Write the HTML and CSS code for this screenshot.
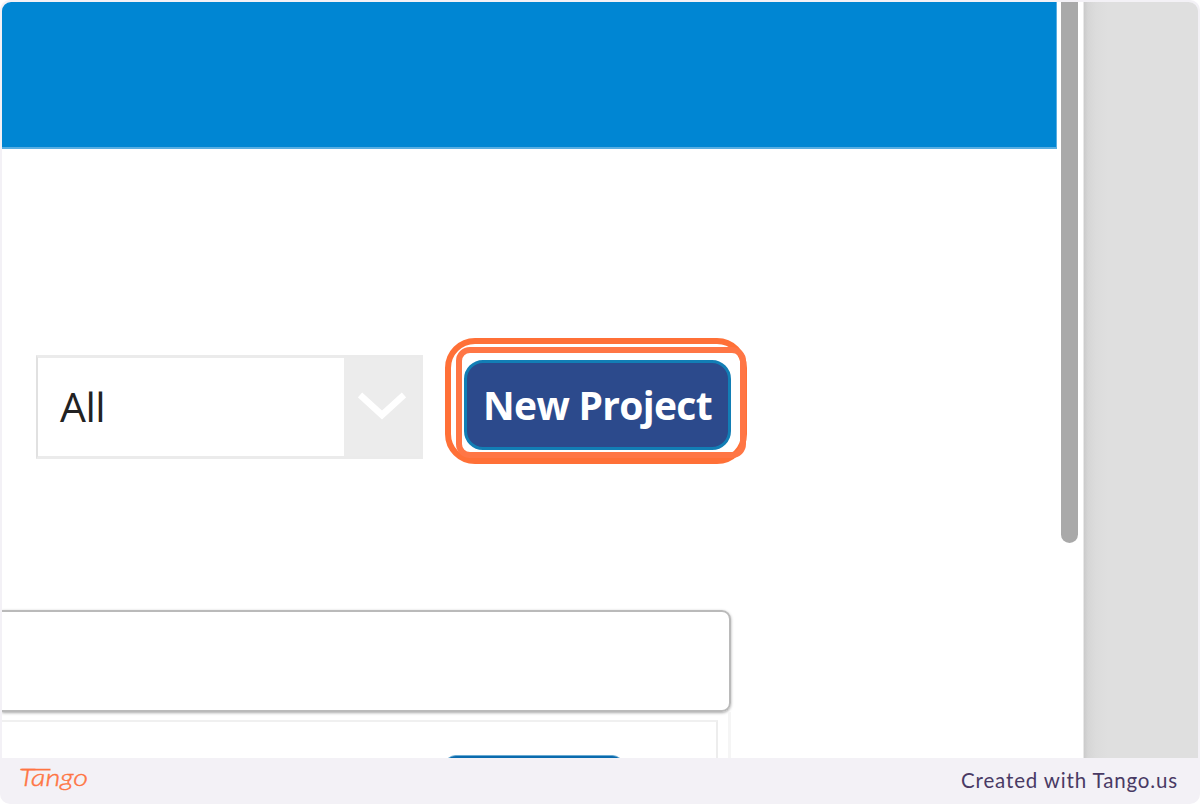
FILE: index.html
```html
<!DOCTYPE html>
<html lang="en">
<head>
    <meta charset="UTF-8">
    <title>New Project</title>
    <link rel="stylesheet" href="styles.css">
</head>
<body>
<div class="frame">
    <div class="screen">
        <div class="page">
            <div class="banner"></div>
            <div class="toolbar">
                <div class="select">
                    <span class="select-value">All</span>
                    <span class="select-arrow">
                        <svg width="48" height="28" viewBox="0 0 48 28">
                            <path d="M2 3 L24 23 L46 3" fill="none" stroke="#fff" stroke-width="6.5"/>
                        </svg>
                    </span>
                </div>
                <div class="highlight">
                    <div class="highlight-inner">
                        <button class="new-project">New Project</button>
                    </div>
                </div>
            </div>
            <div class="panel"></div>
            <div class="list">
                <div class="list-inner">
                    <div class="list-button"></div>
                </div>
            </div>
        </div>
        <div class="scrollbar">
            <div class="thumb"></div>
        </div>
        <div class="backdrop"></div>
    </div>
    <div class="footer">
        <svg class="logo" width="76" height="38" viewBox="0 0 76 38">
            <path d="M4.5 7.6 H33.5" fill="none" stroke="#ff7442" stroke-width="1.8"/>
            <text class="logo-text" x="2" y="23.5" textLength="69" lengthAdjust="spacingAndGlyphs">Tango</text>
        </svg>
        <span class="credit">Created with Tango.us</span>
    </div>
</div>
</body>
</html>
```

FILE: styles.css
```css
* { box-sizing: border-box; }
body {
    margin: 0;
    background: #fff;
    font-family: "Open Sans", "Noto Sans", sans-serif;
}
.frame {
    width: 1200px;
    height: 804px;
    padding: 2px 2px 0;
    background: #f3f1f6;
    border-radius: 10px;
    overflow: hidden;
}
.screen {
    display: flex;
    height: 756px;
    background: #fff;
    border-radius: 9px 9px 0 0;
    overflow: hidden;
}
.page {
    width: 1055px;
    height: 756px;
    overflow: hidden;
}
.banner {
    height: 147px;
    background: #0086d3;
    border-right: 1px solid #58aee2;
    border-bottom: 2px solid #58aee2;
}
.toolbar {
    display: flex;
    align-items: flex-start;
    height: 461px;
    padding: 189px 0 0 34px;
}
.select {
    display: flex;
    width: 387px;
    height: 104px;
    margin-top: 17px;
    border: 3px solid #ebebeb;
    border-left: 2px solid #e1e1e1;
}
.select-value {
    flex: 1;
    padding: 18px 0 0 22px;
    font-size: 41px;
    font-weight: 400;
    line-height: 60px;
    letter-spacing: -0.5px;
    color: #222;
}
.select-arrow {
    display: flex;
    justify-content: center;
    width: 76px;
    padding-top: 34px;
    background: #ececec;
}
.highlight {
    width: 302px;
    height: 126px;
    margin-left: 22px;
    padding: 3px 0 0 5px;
    border: 6px solid #ff7037;
    border-radius: 30px;
}
.highlight-inner {
    width: 290px;
    height: 111px;
    padding: 7px 0 0 2px;
    border: 6px solid #ff7645;
    border-radius: 14px;
}
.new-project {
    display: block;
    width: 267px;
    height: 90px;
    padding: 0 0 1px;
    border: 3px solid #127eb5;
    border-radius: 19px;
    background: #2c4a8c;
    color: #fff;
    font-family: "Open Sans", "Noto Sans", sans-serif;
    font-size: 39px;
    font-weight: 700;
    letter-spacing: -0.7px;
    white-space: nowrap;
}
.panel {
    width: 729px;
    height: 102px;
    border: 2px solid #bababa;
    border-left: none;
    border-radius: 0 9px 9px 0;
    box-shadow: 0 1px 3px #aaa;
}
.list {
    width: 729px;
    height: 60px;
    padding: 8px 10px 0 0;
    border-right: 3px solid #f5f5f5;
}
.list-inner {
    height: 60px;
    padding: 33px 0 0 442px;
    border-top: 2px solid #f0f0f0;
    border-right: 2px solid #ededed;
}
.list-button {
    width: 180px;
    height: 40px;
    border-top: 1px solid #6aabd3;
    border-radius: 12px;
    background: #0a6aad;
}
.scrollbar {
    width: 27px;
    padding-left: 4px;
    border-right: 1px solid #e8e8e8;
}
.thumb {
    width: 17px;
    height: 541px;
    background: #a9a9a9;
    border-radius: 0 0 9px 9px;
}
.backdrop {
    flex: 1;
    background: linear-gradient(to right, #cbcbcb 0, #d6d6d6 4px, #dcdcdc 12px, #dfdfdf 24px);
}
.footer {
    display: flex;
    justify-content: space-between;
    height: 46px;
    padding: 4px 20px 0 15px;
}
.logo {
    overflow: visible;
}
.logo-text {
    font-family: Lato, sans-serif;
    font-size: 23px;
    font-style: italic;
    font-weight: 300;
    fill: #ff7442;
    stroke: #ff7442;
    stroke-width: 0.4px;
}
.credit {
    font-family: Lato, sans-serif;
    font-size: 20.5px;
    line-height: 36px;
    letter-spacing: 0.85px;
    color: #493a64;
}
```
